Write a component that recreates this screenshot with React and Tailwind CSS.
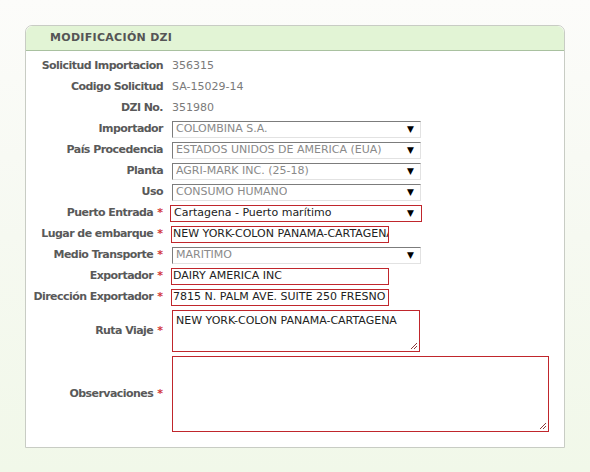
import React from 'react';

const font = { fontFamily: '"DejaVu Sans", Verdana, sans-serif' };

const Star = () => <span className="ml-[4px] text-[#d2353a] tracking-normal">*</span>;

const Label = ({ children, required }) => (
  <div className="w-[138px] shrink-0 text-right font-bold text-[#595959] whitespace-nowrap pr-[1px] tracking-[-0.55px]">
    {children}
    {required && <Star />}
  </div>
);

const Row = ({ label, required, children, className = '' }) => (
  <div className={`flex items-center min-h-[21px] ${className}`}>
    <Label required={required}>{label}</Label>
    <div className="ml-[8px] flex-1 flex items-center">{children}</div>
  </div>
);

const Select = ({ value, error }) => (
  <div
    className={
      error
        ? '-ml-[2px] w-[252px] h-[17px] border border-[#c0262c] bg-white flex items-center justify-between pl-[3px] pr-[7px] text-[#222]'
        : 'w-[249px] h-[17px] border border-t-[#7c7c7c] border-l-[#7c7c7c] border-r-[#e2e2e2] border-b-[#e2e2e2] bg-white flex items-center justify-between pl-[3px] pr-[6px] text-[#8a8a8a]'
    }
  >
    <span className="truncate">{value}</span>
    <span className="text-[9px] text-black leading-none">▼</span>
  </div>
);

const Input = ({ value }) => (
  <div className="-ml-[1px] w-[218px] h-[17px] border border-[#c0262c] bg-white flex items-center pl-[1px] overflow-hidden whitespace-nowrap text-[#222]">
    {value}
  </div>
);

const Grip = () => (
  <svg className="absolute right-[1px] bottom-[1px]" width="8" height="8" viewBox="0 0 8 8">
    <path d="M7 1L1 7M7 4L4 7" stroke="#8a3a3a" strokeWidth="1" />
  </svg>
);

const TextArea = ({ value, w, h }) => (
  <div className={`relative ${w} ${h} border border-[#c0262c] bg-white pl-[3px] pt-[2px] text-[#222]`}>
    {value}
    <Grip />
  </div>
);

export default function App() {
  return (
    <div
      className="w-[590px] h-[472px] overflow-hidden pt-[25px] pl-[25px] text-[11px] bg-gradient-to-b from-[#fcfcfa] via-[#f6f9f1] to-[#f1f8e9]"
      style={font}
    >
      <div className="w-[540px] bg-white border border-[#c8ccc4] rounded-t-[7px]">
        <div className="h-[25px] bg-[#e2f4d5] border-b border-[#a9c1a0] rounded-t-[7px] flex items-center pl-[24px] pt-[1px]">
          <span className="font-bold text-[11px] text-[#555] tracking-[0.3px]">MODIFICACIÓN DZI</span>
        </div>
        <div className="pt-[5px] pb-[13px]">
          <Row label="Solicitud Importacion"><span className="text-[#7a7a7a]">356315</span></Row>
          <Row label="Codigo Solicitud"><span className="text-[#7a7a7a]">SA-15029-14</span></Row>
          <Row label="DZI No."><span className="text-[#7a7a7a]">351980</span></Row>
          <Row label="Importador"><Select value="COLOMBINA S.A." /></Row>
          <Row label="País Procedencia"><Select value="ESTADOS UNIDOS DE AMERICA (EUA)" /></Row>
          <Row label="Planta"><Select value="AGRI-MARK INC. (25-18)" /></Row>
          <Row label="Uso"><Select value="CONSUMO HUMANO" /></Row>
          <Row label="Puerto Entrada" required><Select value="Cartagena - Puerto marítimo" error /></Row>
          <Row label="Lugar de embarque" required><Input value="NEW YORK-COLON PANAMA-CARTAGENA" /></Row>
          <Row label="Medio Transporte" required><Select value="MARITIMO" /></Row>
          <Row label="Exportador" required><Input value="DAIRY AMERICA INC" /></Row>
          <Row label="Dirección Exportador" required><Input value="7815 N. PALM AVE. SUITE 250 FRESNO" /></Row>
          <Row label="Ruta Viaje" required className="py-[2px]">
            <TextArea value="NEW YORK-COLON PANAMA-CARTAGENA" w="w-[248px]" h="h-[42px]" />
          </Row>
          <Row label="Observaciones" required className="py-[2px]">
            <TextArea value="" w="w-[377px]" h="h-[76px]" />
          </Row>
        </div>
      </div>
    </div>
  );
}
